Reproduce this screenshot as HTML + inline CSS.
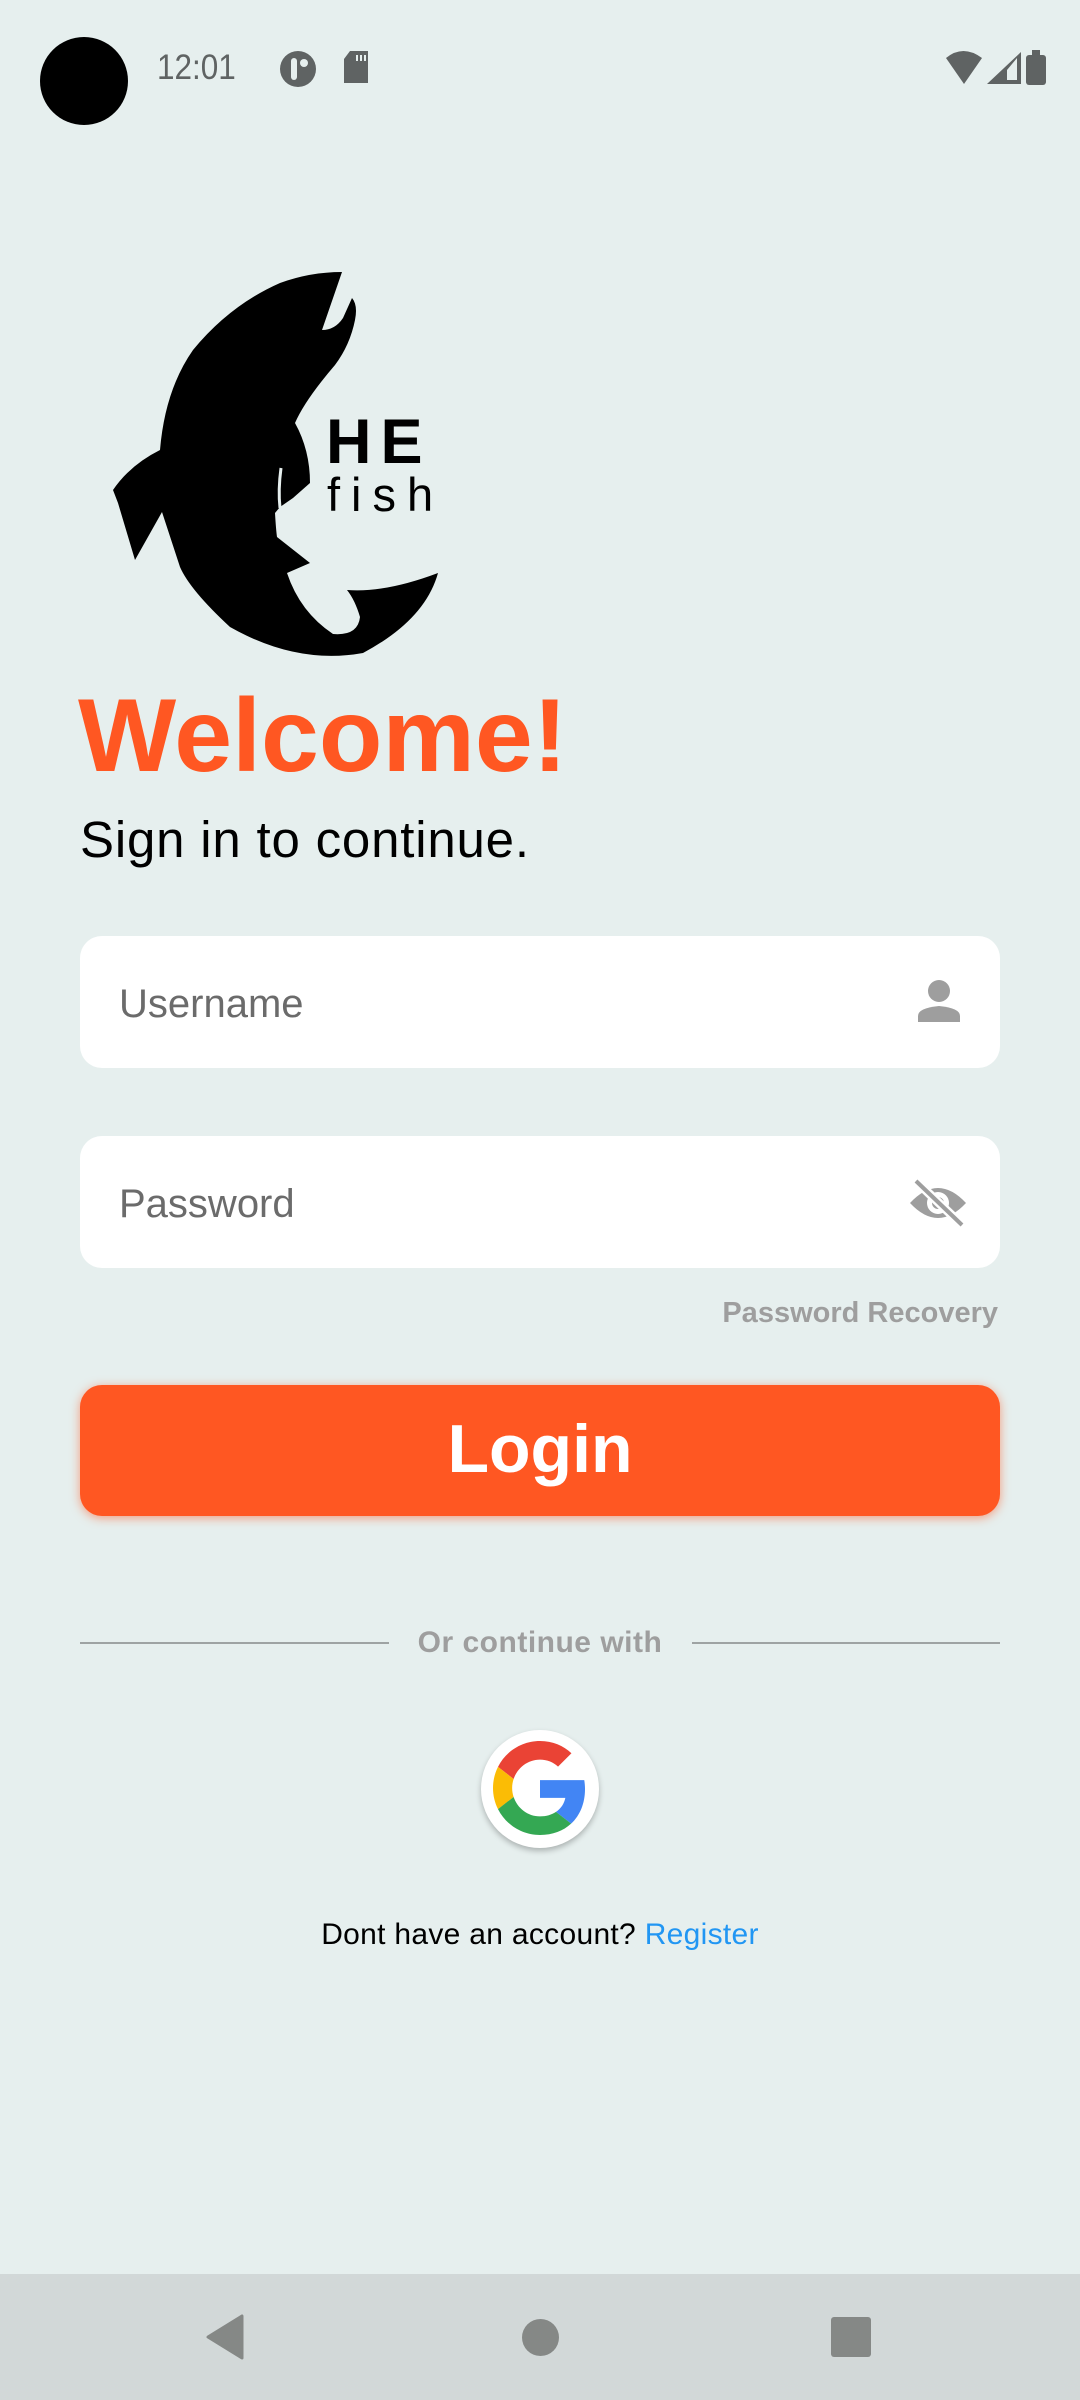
<!DOCTYPE html>
<html><head><meta charset="utf-8"><style>
*{margin:0;padding:0;box-sizing:border-box}
body{width:1080px;height:2400px;background:#e6efee;font-family:"Liberation Sans",sans-serif;position:relative;overflow:hidden}
.a{position:absolute}
.field{position:absolute;left:80px;width:920px;height:132px;background:#fff;border-radius:22px}
.ph{position:absolute;left:39px;top:2px;line-height:132px;font-size:40px;color:#6b6b6b}
</style></head><body>
<div class="a" style="left:40px;top:37px;width:88px;height:88px;border-radius:50%;background:#000"></div>
<div class="a" style="left:157px;top:48px;font-size:35px;color:#5f6363;line-height:40px;transform:scaleX(0.9);transform-origin:left">12:01</div>
<svg class="a" style="left:278px;top:49px" width="40" height="40" viewBox="0 0 40 40"><circle cx="20" cy="20" r="18" fill="#5f6363"/><rect x="13" y="9" width="6" height="22" rx="3" fill="#e6efee"/><circle cx="26" cy="14" r="4" fill="#e6efee"/></svg>
<svg class="a" style="left:342px;top:51px" width="28" height="34" viewBox="0 0 28 34"><path d="M8 0H26V32H2V8Z" fill="#5f6363"/><rect x="14" y="4" width="2" height="6" fill="#e6efee"/><rect x="18" y="4" width="2" height="6" fill="#e6efee"/><rect x="22" y="4" width="2" height="6" fill="#e6efee"/></svg>
<svg class="a" style="left:944px;top:50px" width="110" height="36" viewBox="0 0 110 36"><path d="M2 8Q19 -6 38 8L20 34Z" fill="#5f6363"/><path d="M43 34L77 2V34Z" fill="#5f6363"/><path d="M63 20L73 8V30H63Z" fill="#e6efee"/><rect x="96" y="5" width="20" height="30" rx="3" fill="#5f6363" transform="translate(-14 0)"/><rect x="88" y="0" width="8" height="6" fill="#5f6363"/></svg>

<svg class="a" style="left:0;top:0" width="500" height="700" viewBox="0 0 500 700">
<path fill="#000" d="M342,272 L322,330 Q335,330 343,318 L352,298 Q358,305 355,320 Q350,345 335,365 Q305,400 295,423 Q310,450 310,483 L293,498 L280,507 L275,513 Q276,530 277,537 L310,563 L287,573 Q300,612 333,634 Q358,636 360,617 Q355,600 347,590 Q385,593 438,573 Q425,620 363,653 Q297,665 230,627 Q190,590 180,567 L162,512 L135,560 L118,503 L113,490 Q130,465 160,450 Q165,390 193,350 Q230,305 280,283 Q310,272 342,272 Z"/>
<path d="M281,468 Q278,490 280,508" stroke="#e6efee" stroke-width="3" fill="none"/>
<text x="326" y="463" font-family="Liberation Sans" font-weight="bold" font-size="63" letter-spacing="9">HE</text>
<text x="327" y="511" font-family="Liberation Sans" font-size="47" letter-spacing="11">fish</text>
</svg>

<div class="a" style="left:78px;top:676px;font-size:104px;font-weight:bold;color:#ff5722;line-height:120px">Welcome!</div>
<div class="a" style="left:80px;top:810px;font-size:51px;color:#000;line-height:60px;letter-spacing:0.8px">Sign in to continue.</div>

<div class="field" style="top:936px"><div class="ph">Username</div>
<svg class="a" style="left:836px;top:42px" width="46" height="46" viewBox="0 0 46 46"><circle cx="23" cy="13" r="11" fill="#9e9e9e"/><path d="M2 44V38Q2 30 23 28Q44 30 44 38V44Z" fill="#9e9e9e"/></svg></div>
<div class="field" style="top:1136px"><div class="ph">Password</div>
<svg class="a" style="left:828px;top:42px" width="60" height="50" viewBox="0 0 60 50"><path d="M2 25Q30 -5 58 25Q30 55 2 25Z" fill="#9e9e9e"/><circle cx="30" cy="25" r="11" fill="#fff"/><circle cx="30" cy="25" r="6" fill="#9e9e9e"/><path d="M8 3L54 47" stroke="#fff" stroke-width="9"/><path d="M8 3L54 47" stroke="#9e9e9e" stroke-width="4"/></svg></div>
<div class="a" style="right:82px;top:1296px;font-size:29px;font-weight:bold;color:#9e9e9e;line-height:34px">Password Recovery</div>

<div class="a" style="left:80px;top:1385px;width:920px;height:131px;background:#ff5722;border-radius:22px;box-shadow:0 2px 10px rgba(255,87,34,0.55);text-align:center;line-height:128px;color:#fff;font-size:68px;font-weight:bold">Login</div>

<div class="a" style="left:80px;top:1642px;width:309px;height:2px;background:#9ea3a3"></div>
<div class="a" style="left:692px;top:1642px;width:308px;height:2px;background:#9ea3a3"></div>
<div class="a" style="left:380px;top:1626px;width:320px;text-align:center;font-size:30px;font-weight:bold;color:#9e9e9e;line-height:34px;letter-spacing:0.5px">Or continue with</div>

<div class="a" style="left:481px;top:1730px;width:118px;height:118px;border-radius:50%;background:#fff;box-shadow:0 3px 6px rgba(0,0,0,0.25)"></div>
<svg class="a" style="left:493px;top:1741px" width="94" height="94" viewBox="0 0 48 48">
<path fill="#EA4335" d="M24 9.5c3.54 0 6.71 1.220 9.21 3.6l6.85-6.85C35.9 2.38 30.47 0 24 0 14.62 0 6.51 5.38 2.56 13.22l7.98 6.19C12.43 13.72 17.74 9.5 24 9.5z"/>
<path fill="#4285F4" d="M46.98 24.55c0-1.57-.15-3.09-.38-4.55H24v9.02h12.94c-.58 2.96-2.26 5.48-4.78 7.18l7.73 6c4.51-4.18 7.09-10.360 7.09-17.65z"/>
<path fill="#FBBC05" d="M10.53 28.59c-.48-1.45-.76-2.99-.76-4.59s.27-3.14.76-4.59l-7.98-6.19C.92 16.46 0 20.12 0 24c0 3.88.92 7.54 2.56 10.78l7.97-6.19z"/>
<path fill="#34A853" d="M24 48c6.48 0 11.93-2.13 15.89-5.81l-7.73-6c-2.15 1.45-4.92 2.3-8.16 2.3-6.26 0-11.57-4.22-13.47-9.91l-7.98 6.19C6.51 42.62 14.62 48 24 48z"/>
</svg>

<div class="a" style="left:0;width:1080px;top:1917px;text-align:center;font-size:30px;color:#000;line-height:36px;letter-spacing:0.3px">Dont have an account? <span style="color:#2196f3">Register</span></div>

<div class="a" style="left:0;top:2274px;width:1080px;height:126px;background:#d2d8d8"></div>
<svg class="a" style="left:205px;top:2314px" width="40" height="46" viewBox="0 0 40 46"><path d="M37 2V44L3 23Z" fill="#858886" stroke="#858886" stroke-width="3" stroke-linejoin="round"/></svg>
<div class="a" style="left:522px;top:2319px;width:37px;height:37px;border-radius:50%;background:#858886"></div>
<div class="a" style="left:831px;top:2317px;width:40px;height:40px;border-radius:3px;background:#858886"></div>
</body></html>
